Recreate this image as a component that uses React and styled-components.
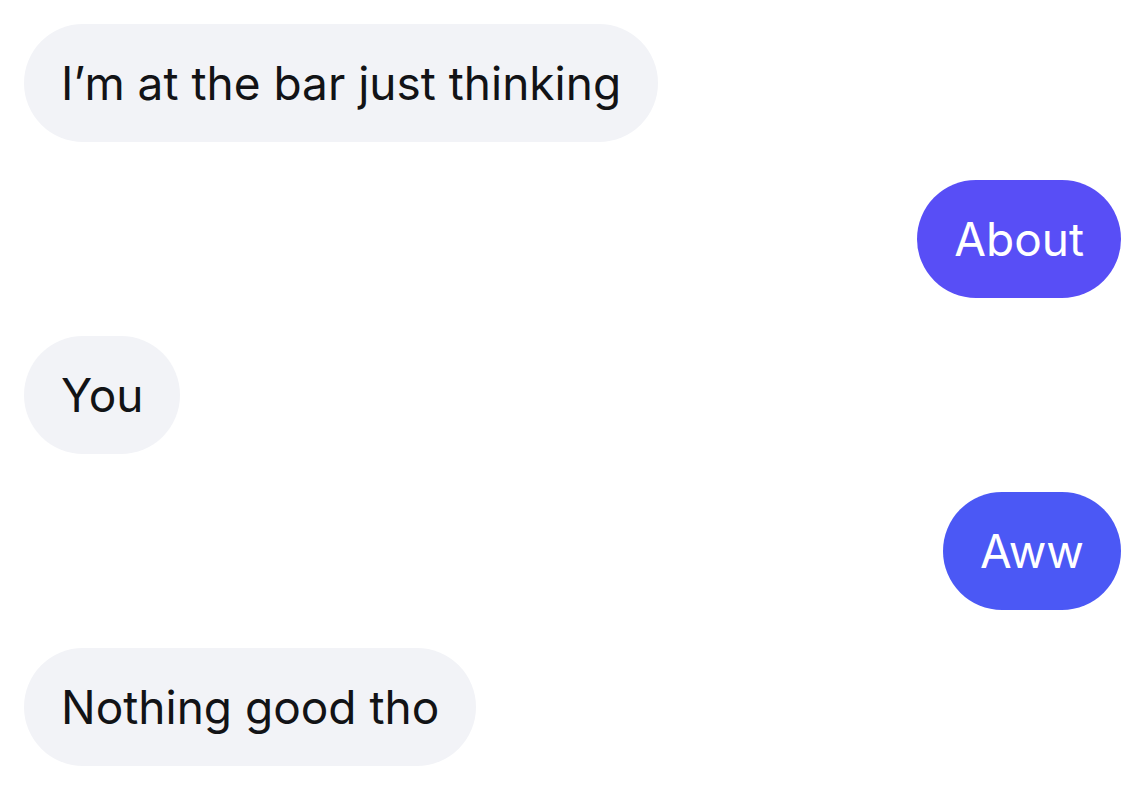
import React from "react";
import styled, { createGlobalStyle } from "styled-components";

const GlobalStyle = createGlobalStyle`
  html, body {
    margin: 0;
    padding: 0;
    background: #ffffff;
  }
  body {
    font-family: Inter, "Noto Sans", "Liberation Sans", sans-serif;
    -webkit-font-smoothing: antialiased;
  }
`;

const Thread = styled.div`
  display: flex;
  flex-direction: column;
  gap: 38px;
  padding: 24px 24px;
`;

const Row = styled.div`
  display: flex;
  justify-content: ${(props) => (props.mine ? "flex-end" : "flex-start")};
`;

const Bubble = styled.div`
  height: 118px;
  box-sizing: border-box;
  display: flex;
  align-items: center;
  padding: 0 37px;
  border-radius: 59px;
  background: ${(props) => props.tint || "#f2f3f7"};
  color: ${(props) => (props.mine ? "#ffffff" : "#121316")};
  font-size: 46px;
  letter-spacing: 0;
  white-space: nowrap;
`;

const messages = [
  { id: 1, text: "I\u2019m at the bar just thinking" },
  { id: 2, text: "About", mine: true, tint: "#584ef6" },
  { id: 3, text: "You" },
  { id: 4, text: "Aww", mine: true, tint: "#4b58f5" },
  { id: 5, text: "Nothing good tho" },
];

const App = () => (
  <>
    <GlobalStyle />
    <Thread>
      {messages.map((m) => (
        <Row key={m.id} mine={m.mine}>
          <Bubble mine={m.mine} tint={m.tint}>
            {m.text}
          </Bubble>
        </Row>
      ))}
    </Thread>
  </>
);

export default App;
